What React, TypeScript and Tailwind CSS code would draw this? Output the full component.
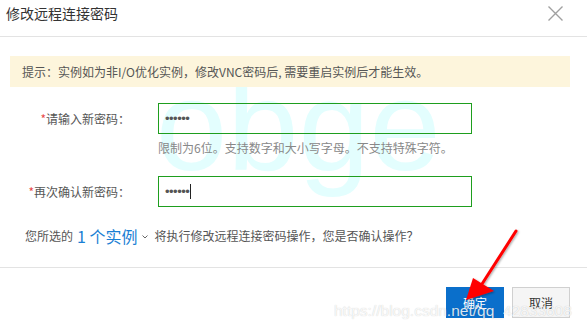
import React from 'react';

const CJK = '[font-family:"Noto_Sans_CJK_SC","Liberation_Sans",sans-serif]';

function CloseIcon() {
  return (
    <svg width="17" height="17" viewBox="0 0 17 17" className="mt-[2px]">
      <path d="M1.5 1.5 L15.5 15.5 M15.5 1.5 L1.5 15.5" stroke="#a0a0a0" strokeWidth="1.4" fill="none" />
    </svg>
  );
}

function PasswordRow({ label, caret }: { label: string; caret?: boolean }) {
  return (
    <div className="flex items-center">
      <div className="w-[130px] text-right text-[12px] leading-[18px] text-[#555]">
        <span className="text-[#e94b4b]">*</span>
        {label}
      </div>
      <div className="ml-[28px] w-[314px] h-[31px] border border-[#1e9e1e] bg-transparent flex items-center pl-[6px]">
        <span className="[font-family:'Liberation_Sans',sans-serif] text-[13px] text-[#555] tracking-[-0.5px]">••••••</span>
        {caret && <span className="w-px h-[15px] bg-[#222] ml-px" />}
      </div>
    </div>
  );
}

export default function App() {
  return (
    <div className={`relative w-[587px] h-[334px] overflow-hidden bg-white ${CJK}`}>
      {/* watermark behind the form */}
      <div className="absolute left-[156px] top-[62px] text-[128px] leading-none text-[#e3fefe] [font-family:'Liberation_Sans',sans-serif] select-none">
        obge
      </div>

      <div className="relative">
        {/* Header */}
        <div className="h-[37px] border-b border-[#e3e3e3] flex items-start justify-between pl-[6px] pr-[23px] pt-[3px]">
          <span className="text-[14px] leading-[20px] text-[#333]">修改远程连接密码</span>
          <CloseIcon />
        </div>

        {/* Body */}
        <div className="px-[10px] pt-[19px]">
          <div className="w-[560px] h-[31px] bg-[#fdf5dc] flex items-center pl-[12px] text-[12px] text-[#555]">
            提示：实例如为非I/O优化实例，修改VNC密码后, 需要重启实例后才能生效。
          </div>
        </div>

        <div className="mt-[16px]">
          <PasswordRow label="请输入新密码：" />
          <div className="ml-[158px] mt-[5px] h-[18px] text-[12px] leading-[18px] text-[#888]">
            限制为6位。支持数字和大小写字母。不支持特殊字符。
          </div>
          <div className="mt-[19px]">
            <PasswordRow label="再次确认新密码：" caret />
          </div>
        </div>

        <div className="mt-[19px] pl-[25px] h-[20px] flex items-center text-[12px] text-[#555]">
          <span>您所选的</span>
          <span className="ml-[4px] text-[16px] text-[#1a7fd4]">1 个实例</span>
          <svg width="6" height="4" viewBox="0 0 6 4" className="ml-[5px] mt-[2px]">
            <path d="M0.5 0.5 L3 3 L5.5 0.5" stroke="#666" strokeWidth="1" fill="none" />
          </svg>
          <span className="ml-[6px]">将执行修改远程连接密码操作，您是否确认操作？</span>
        </div>

        {/* Footer */}
        <div className="mt-[21px] border-t border-[#e3e3e3] flex justify-end gap-[8px] pr-[17px] pt-[19px]">
          <button className="w-[58px] h-[31px] bg-[#0a6fcb] text-white text-[12px]">确定</button>
          <button className="w-[58px] h-[31px] bg-[#f5f5f5] border border-[#d0d0d0] text-[#333] text-[12px]">取消</button>
        </div>
      </div>

      {/* blog url watermark */}
      <div className="absolute left-[334px] top-[301px] text-[15.5px] leading-[20px] text-[rgba(255,255,255,0.85)] [font-family:'Liberation_Sans',sans-serif] [text-shadow:0_0_1px_rgba(0,0,0,0.22)]">
        https://blog.csdn.net/qq_42833608
      </div>

      {/* red annotation arrow */}
      <svg className="absolute left-0 top-0" width="587" height="334" viewBox="0 0 587 334">
        <defs>
          <filter id="sh" x="-20%" y="-20%" width="140%" height="140%">
            <feDropShadow dx="1" dy="1" stdDeviation="1" floodColor="#000" floodOpacity="0.35" />
          </filter>
        </defs>
        <g filter="url(#sh)">
          <path d="M516 231 L482 284" stroke="#f00" strokeWidth="3" strokeLinecap="round" fill="none" />
          <polygon points="466,300 473,278 494,291" fill="#f00" />
        </g>
      </svg>
    </div>
  );
}
